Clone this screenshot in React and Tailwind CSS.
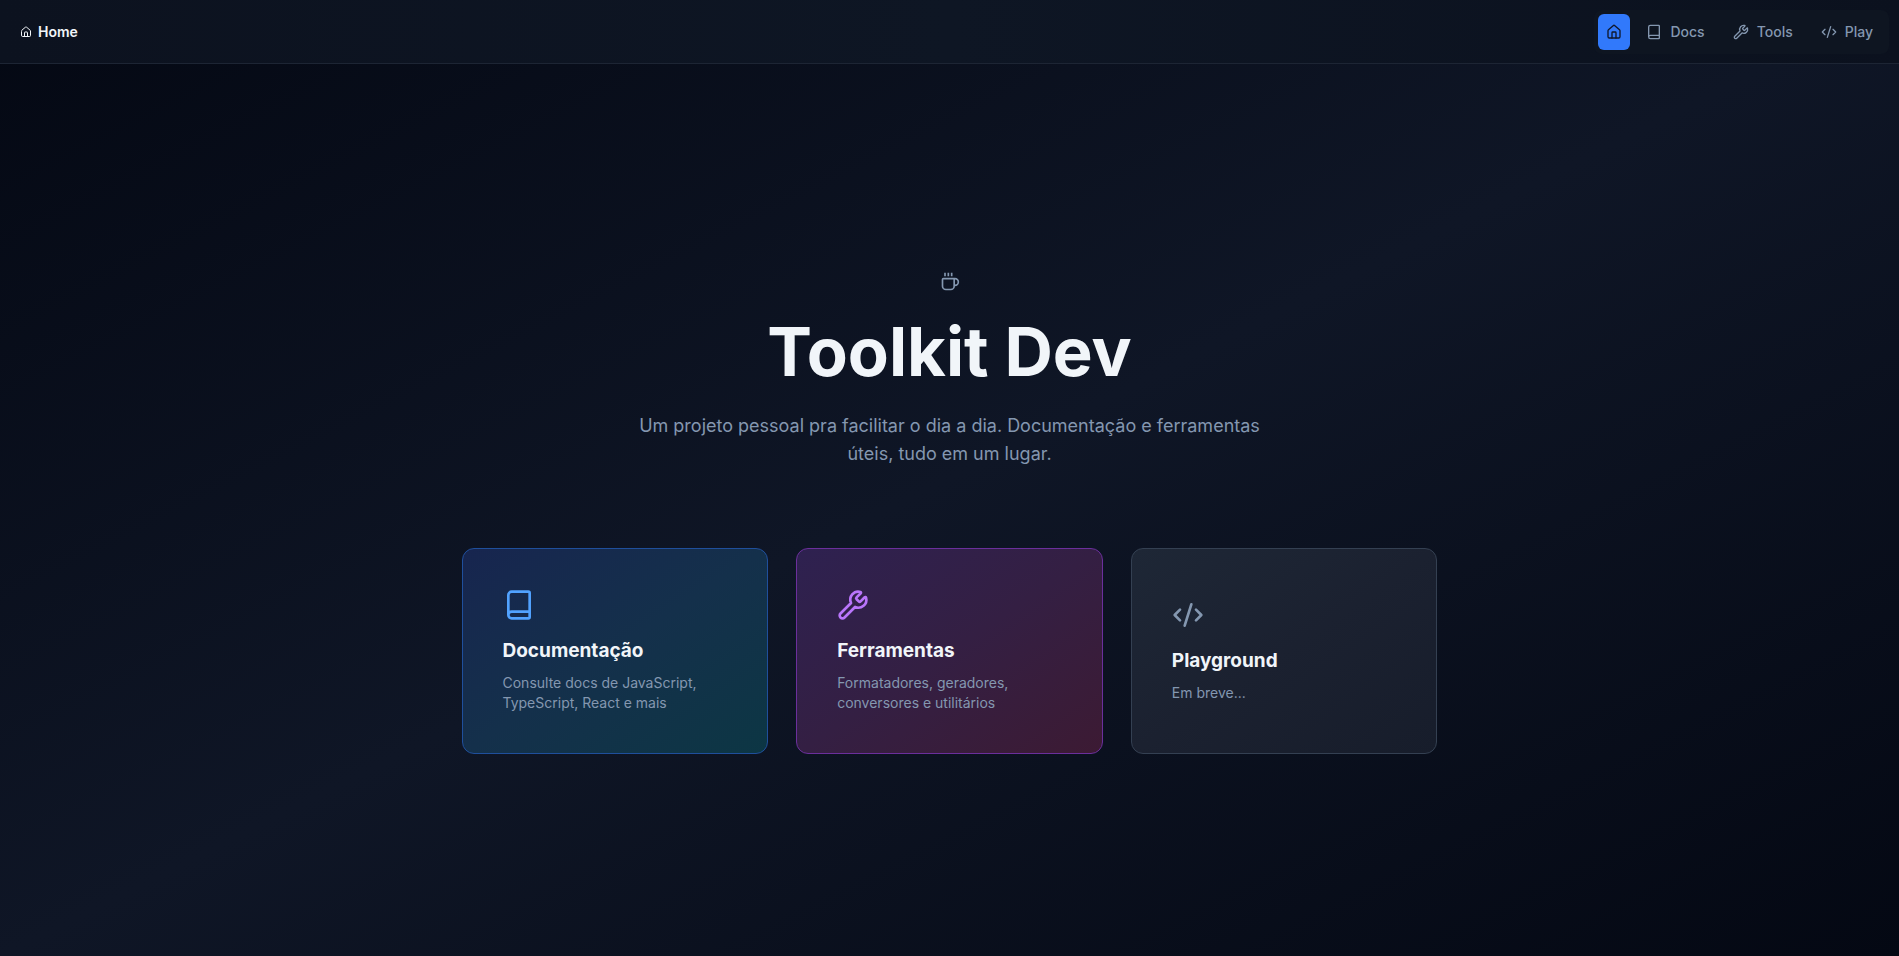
import { Home, Book, Wrench, CodeXml } from 'lucide-react';

function CupIcon({ className }) {
  return (
    <svg viewBox="0 0 24 24" fill="none" stroke="currentColor" strokeWidth="2" className={className} aria-hidden="true">
      <path d="M10 1v4M14 1v4M6 1v4" />
      <path strokeLinecap="round" strokeLinejoin="round" d="M16 8a1 1 0 0 1 1 1v8a4 4 0 0 1-4 4H7a4 4 0 0 1-4-4V9a1 1 0 0 1 1-1h14a4 4 0 1 1 0 8h-1" />
    </svg>
  );
}

const links = [
  { label: 'Docs', icon: Book },
  { label: 'Tools', icon: Wrench },
  { label: 'Play', icon: CodeXml },
];

const cards = [
  {
    title: 'Documentação',
    text: 'Consulte docs de JavaScript, TypeScript, React e mais',
    icon: Book,
    iconClass: 'text-[#51a2ff]',
    cardClass: 'border-[#1f4f9c] from-[#17254f] via-[#14304b] to-[#0c3644]',
  },
  {
    title: 'Ferramentas',
    text: 'Formatadores, geradores, conversores e utilitários',
    icon: Wrench,
    iconClass: 'text-[#b975fb]',
    cardClass: 'border-[#6b2f9c] from-[#2e2150] via-[#341f43] to-[#3c1a33]',
  },
  {
    title: 'Playground',
    text: 'Em breve...',
    icon: CodeXml,
    iconClass: 'text-[#8497b0]',
    cardClass: 'border-[#344052] from-[#1e2736] via-[#1b2130] to-[#171d2b]',
  },
];

export default function App() {
  return (
    <div className="flex min-h-screen flex-col bg-linear-to-br/srgb from-[#040813] via-[#0f1626] to-[#040813] font-['Inter',sans-serif] text-[#f1f5f9]">
      <header className="flex h-16 items-center justify-between border-b border-[#1d2534] bg-linear-to-r from-[#0c121f] via-[#0e1624] to-[#0b111e] pr-2.5 pl-3">
        <a href="#home" className="flex items-center gap-1.5 px-2 text-sm font-semibold">
          <Home className="size-3" aria-hidden="true" />
          Home
        </a>
        <nav className="flex items-center gap-1 rounded-lg bg-[#0e1521] p-1 text-sm font-medium text-[#8497b0]">
          <a href="#home" aria-label="Home" className="flex h-9 items-center rounded-md bg-[#3179fb] px-2 text-[#0f172b]">
            <Home className="size-4" aria-hidden="true" />
          </a>
          {links.map(({ label, icon: Icon }) => (
            <a key={label} href={`#${label.toLowerCase()}`} className="flex h-9 items-center gap-2 px-3">
              <Icon className="size-4" aria-hidden="true" />
              {label}
            </a>
          ))}
        </nav>
      </header>
      <main className="flex flex-1 flex-col items-center justify-center pt-1.5">
        <section className="flex flex-col items-center px-6 text-center">
          <CupIcon className="size-5 text-[#8497b0]" />
          <h1 className="mt-6 text-[67px]/[72px] font-bold">Toolkit Dev</h1>
          <p className="mt-6 max-w-160 text-lg/7 text-[#8497b0]">
            Um projeto pessoal pra facilitar o dia a dia. Documentação e ferramentas úteis, tudo em um lugar.
          </p>
        </section>
        <section className="mt-20 grid w-full max-w-5xl grid-cols-3 gap-7 px-6">
          {cards.map(({ title, text, icon: Icon, iconClass, cardClass }) => (
            <a key={title} href={`#${title.toLowerCase()}`} className={`flex flex-col justify-center rounded-xl border bg-linear-to-br p-10 ${cardClass}`}>
              <Icon className={`size-8 ${iconClass}`} aria-hidden="true" />
              <h2 className="mt-4 text-[19px]/7 font-bold">{title}</h2>
              <p className="mt-2 text-sm/5 text-[#8497b0]">{text}</p>
            </a>
          ))}
        </section>
      </main>
    </div>
  );
}
